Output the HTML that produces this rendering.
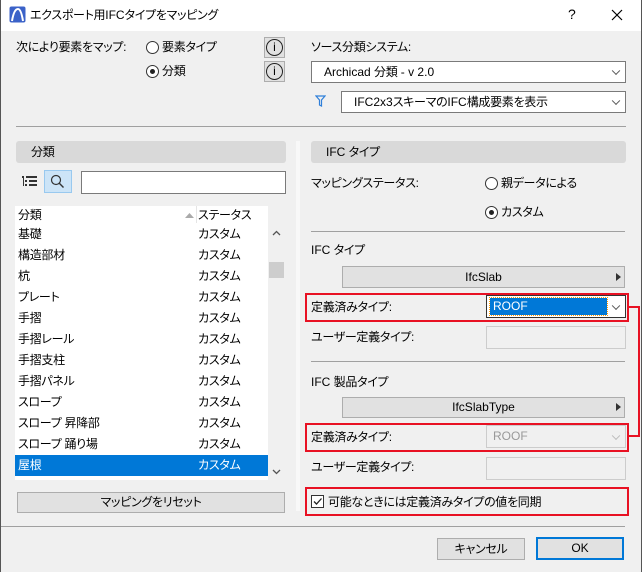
<!DOCTYPE html>
<html><head><meta charset="utf-8"><style>
*{box-sizing:border-box;margin:0;padding:0}
body{width:642px;height:572px;background:#f0f0f0;font-family:"Liberation Sans","Noto Sans CJK JP",sans-serif;font-size:12px;color:#000;position:relative;overflow:hidden;font-feature-settings:"palt"}
.a{position:absolute;white-space:nowrap}
.t{line-height:16px;letter-spacing:-0.3px}
.l{letter-spacing:0}
.radio{position:absolute;width:13px;height:13px;border:1px solid #333;border-radius:50%;background:#fff}
.radio.on::after{content:"";position:absolute;left:3px;top:3px;width:5px;height:5px;border-radius:50%;background:#222}
.info{position:absolute;width:21px;height:21px;background:#e1e1e1;border:1px solid #adadad}
.info div{position:absolute;left:1px;top:1px;width:17px;height:17px;border:1.3px solid #222;border-radius:50%;font:12px/15px "Liberation Sans",sans-serif;text-align:center}
.sel{position:absolute;background:#fff;border:1px solid #7a7a7a}
.chev{position:absolute;right:6px;top:50%;width:6px;height:6px;border-right:1px solid #555;border-bottom:1px solid #555;transform:translateY(-70%) rotate(45deg)}
.hdr{position:absolute;background:#d9d9d9;border-radius:3px;height:22px;line-height:22px;padding-left:15px;letter-spacing:-0.3px}
.line{position:absolute;height:1px;background:#a0a0a0}
.btn{position:absolute;background:#e1e1e1;border:1px solid #adadad;text-align:center}
.red{position:absolute;border:2px solid #e81123}
.row{position:absolute;left:15px;width:253px;height:21px;line-height:21px;letter-spacing:-0.3px}
.row span{position:absolute;left:3px}
.row b{font-weight:normal;position:absolute;left:183px}
</style></head><body>
<div class="a" style="left:0;top:0;width:642px;height:31px;background:#fff"></div>
<div class="a" style="left:0;top:0;width:1px;height:572px;background:#555"></div>
<div class="a" style="right:0;top:0;width:1px;height:572px;background:#555"></div>
<svg class="a" style="left:9px;top:6px" width="17" height="17"><rect x="0.5" y="0.5" width="16" height="16" rx="2" fill="#3b62c8"/><path d="M3 15 Q5 3 9 3 Q12 3 14 15" stroke="#fff" stroke-width="2" fill="none"/></svg>
<div class="a t" style="left:30px;top:7px">エクスポート用<span class="l">IFC</span>タイプをマッピング</div>
<div class="a" style="left:568px;top:6px;font-size:14px">?</div>
<svg class="a" style="left:611px;top:9px" width="12" height="12"><path d="M1 1L11 11M11 1L1 11" stroke="#000" stroke-width="1.2"/></svg>

<div class="a t" style="left:16px;top:39px">次により要素をマップ:</div>
<div class="radio" style="left:146px;top:41px"></div><div class="a t" style="left:162px;top:39px">要素タイプ</div>
<div class="radio on" style="left:146px;top:65px"></div><div class="a t" style="left:162px;top:63px">分類</div>
<div class="info" style="left:264px;top:37px"><div>i</div></div>
<div class="info" style="left:264px;top:61px"><div>i</div></div>

<div class="a t" style="left:311px;top:39px">ソース分類システム:</div>
<div class="sel" style="left:311px;top:61px;width:315px;height:22px"><div class="a t" style="left:12px;top:2px"><span class="l">Archicad </span>分類<span class="l"> - v 2.0</span></div><div class="chev"></div></div>
<svg class="a" style="left:315px;top:95px" width="11" height="12"><path d="M1 1H10L6.5 5V11L4.5 10V5Z" fill="none" stroke="#2f7fd9" stroke-width="1.2"/></svg>
<div class="sel" style="left:341px;top:91px;width:285px;height:22px"><div class="a t" style="left:12px;top:2px"><span class="l">IFC2x3</span>スキーマの<span class="l">IFC</span>構成要素を表示</div><div class="chev"></div></div>
<div class="line" style="left:16px;top:126px;width:610px"></div>

<div class="hdr" style="left:16px;top:141px;width:270px">分類</div>
<div class="a" style="left:296px;top:141px;width:4px;height:370px;background:#f8f8f8"></div>
<svg class="a" style="left:22px;top:175px" width="16" height="13"><g fill="#333"><rect x="0" y="1" width="2" height="2"/><rect x="4" y="1" width="11" height="2"/><rect x="3" y="5" width="2" height="2"/><rect x="7" y="5" width="8" height="2"/><rect x="3" y="9" width="2" height="2"/><rect x="7" y="9" width="8" height="2"/><rect x="1" y="3" width="1" height="8"/></g></svg>
<div class="a" style="left:44px;top:170px;width:28px;height:23px;background:#cce4f7;border:1px solid #99c9ef"></div>
<svg class="a" style="left:50px;top:174px" width="15" height="15"><circle cx="6" cy="6" r="4.5" stroke="#333" stroke-width="1.2" fill="none"/><path d="M9.3 9.3L13.5 13.5" stroke="#333" stroke-width="1.4"/></svg>
<div class="a" style="left:81px;top:171px;width:205px;height:23px;background:#fff;border:1px solid #7a7a7a"></div>

<div class="a" style="left:15px;top:206px;width:253px;height:274px;background:#fff"></div>
<div class="a" style="left:196px;top:206px;width:1px;height:17px;background:#e5e5e5"></div>
<div class="a t" style="left:18px;top:207px">分類</div>
<svg class="a" style="left:185px;top:212px" width="9" height="6"><path d="M0 6L4.5 1L9 6Z" fill="#aaa"/></svg>
<div class="a t" style="left:198px;top:207px">ステータス</div>
<div class="row" style="top:224px"><span>基礎</span><b>カスタム</b></div>
<div class="row" style="top:245px"><span>構造部材</span><b>カスタム</b></div>
<div class="row" style="top:266px"><span>杭</span><b>カスタム</b></div>
<div class="row" style="top:287px"><span>プレート</span><b>カスタム</b></div>
<div class="row" style="top:308px"><span>手摺</span><b>カスタム</b></div>
<div class="row" style="top:329px"><span>手摺レール</span><b>カスタム</b></div>
<div class="row" style="top:350px"><span>手摺支柱</span><b>カスタム</b></div>
<div class="row" style="top:371px"><span>手摺パネル</span><b>カスタム</b></div>
<div class="row" style="top:392px"><span>スロープ</span><b>カスタム</b></div>
<div class="row" style="top:413px"><span>スロープ 昇降部</span><b>カスタム</b></div>
<div class="row" style="top:434px"><span>スロープ 踊り場</span><b>カスタム</b></div>
<div class="row" style="top:455px;background:#0078d7;color:#fff"><span>屋根</span><b>カスタム</b></div>
<svg class="a" style="left:272px;top:230px" width="9" height="6"><path d="M1 5L4.5 1.5L8 5" stroke="#555" stroke-width="1.3" fill="none"/></svg>
<div class="a" style="left:269px;top:262px;width:15px;height:16px;background:#cdcdcd"></div>
<svg class="a" style="left:272px;top:469px" width="9" height="6"><path d="M1 1L4.5 4.5L8 1" stroke="#555" stroke-width="1.3" fill="none"/></svg>
<div class="btn t" style="left:17px;top:492px;width:268px;height:21px;line-height:19px">マッピングをリセット</div>

<div class="hdr" style="left:311px;top:141px;width:315px"><span class="l">IFC </span>タイプ</div>
<div class="a t" style="left:311px;top:175px">マッピングステータス:</div>
<div class="radio" style="left:485px;top:177px"></div><div class="a t" style="left:501px;top:175px">親データによる</div>
<div class="radio on" style="left:485px;top:206px"></div><div class="a t" style="left:501px;top:204px">カスタム</div>
<div class="line" style="left:311px;top:231px;width:314px"></div>
<div class="a t" style="left:311px;top:242px"><span class="l">IFC </span>タイプ</div>
<div class="btn" style="left:342px;top:266px;width:283px;height:22px;line-height:20px">IfcSlab</div>
<svg class="a" style="left:616px;top:273px" width="5" height="8"><path d="M0 0L5 4L0 8Z" fill="#333"/></svg>
<div class="red" style="left:305px;top:293px;width:324px;height:29px"></div>
<div class="a t" style="left:311px;top:299px">定義済みタイプ:</div>
<div class="sel" style="left:486px;top:295px;width:140px;height:23px;border-color:#333"><div class="a" style="left:3px;top:2px;width:117px;height:17px;background:#0078d7;color:#fff;line-height:17px;padding-left:3px;outline:1px dotted #f90">ROOF</div><div class="chev"></div></div>
<div class="a t" style="left:311px;top:329px">ユーザー定義タイプ:</div>
<div class="a" style="left:486px;top:326px;width:140px;height:23px;background:#f0f0f0;border:1px solid #ccc"></div>
<div class="line" style="left:311px;top:361px;width:314px"></div>
<div class="a t" style="left:311px;top:374px"><span class="l">IFC </span>製品タイプ</div>
<div class="btn" style="left:342px;top:397px;width:283px;height:21px;line-height:19px">IfcSlabType</div>
<svg class="a" style="left:616px;top:403px" width="5" height="8"><path d="M0 0L5 4L0 8Z" fill="#333"/></svg>
<div class="red" style="left:305px;top:423px;width:324px;height:29px"></div>
<div class="a t" style="left:311px;top:429px">定義済みタイプ:</div>
<div class="a" style="left:486px;top:425px;width:140px;height:23px;background:#f0f0f0;border:1px solid #ccc;color:#999;line-height:21px;padding-left:6px">ROOF<div class="chev" style="border-color:#bbb"></div></div>
<div class="a t" style="left:311px;top:459px">ユーザー定義タイプ:</div>
<div class="a" style="left:486px;top:457px;width:140px;height:23px;background:#f0f0f0;border:1px solid #ccc"></div>
<div class="red" style="left:305px;top:487px;width:324px;height:29px"></div>
<div class="a" style="left:311px;top:495px;width:13px;height:13px;background:#fff;border:1px solid #333"></div>
<svg class="a" style="left:312px;top:496px" width="11" height="11"><path d="M2 5.5L4.5 8L9.5 2.5" stroke="#222" stroke-width="1.3" fill="none"/></svg>
<div class="a t" style="left:328px;top:494px">可能なときには定義済みタイプの値を同期</div>
<div class="a" style="left:628px;top:306px;width:12px;height:131px;border:2px solid #e81123;border-left:none"></div>
<div class="line" style="left:1px;top:526px;width:624px"></div>
<div class="btn t" style="left:437px;top:538px;width:88px;height:22px;line-height:20px">キャンセル</div>
<div class="btn" style="left:536px;top:537px;width:88px;height:23px;line-height:19px;border:2px solid #0078d7">OK</div>
</body></html>
